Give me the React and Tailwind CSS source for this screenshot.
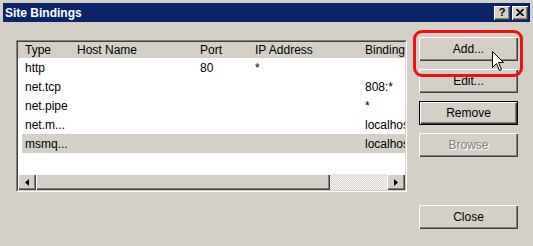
import React from 'react';

const cols = [
  { label: 'Type', w: 'w-[52px]' },
  { label: 'Host Name', w: 'w-[123px]' },
  { label: 'Port', w: 'w-[55px]' },
  { label: 'IP Address', w: 'w-[110px]' },
  { label: 'Binding', w: 'w-[70px]' },
];

const rows = [
  ['http', '', '80', '*', ''],
  ['net.tcp', '', '', '', '808:*'],
  ['net.pipe', '', '', '', '*'],
  ['net.m...', '', '', '', 'localhost'],
  ['msmq...', '', '', '', 'localhost'],
];

const raised = 'shadow-[inset_1px_1px_0_#ffffff,inset_-1px_-1px_0_#404040,inset_-2px_-2px_0_#808080]';

function Button({ children, primary, disabled }) {
  return (
    <div className={`w-[99px] h-[24px] ${primary ? 'border border-black' : ''}`}>
      <div className={`w-full h-full flex items-center justify-center ${raised} ${disabled ? 'text-[#808080] [text-shadow:1px_1px_0_#ffffff]' : ''}`}>
        {children}
      </div>
    </div>
  );
}

function Arrow({ dir }) {
  return (
    <svg width="4" height="7" viewBox="0 0 4 7">
      {dir === 'left' ? <path d="M4 0 L0 3.5 L4 7 Z" fill="#000" /> : <path d="M0 0 L4 3.5 L0 7 Z" fill="#000" />}
    </svg>
  );
}

export default function App() {
  return (
    <div className="w-[533px] h-[246px] bg-[#d4d0c8] relative overflow-hidden font-['Liberation_Sans',Arial,sans-serif] text-[12px] text-black">
      {/* title bar */}
      <div className="mx-[3px] mt-[3px] h-[19px] bg-[#0a246a] flex items-center pl-[2px] pr-[2px]">
        <span className="text-white font-bold text-[12px]">Site Bindings</span>
        <div className="ml-auto flex gap-[2px]">
          <div className={`w-[16px] h-[14px] bg-[#d4d0c8] ${raised} flex items-center justify-center font-bold text-[11px] leading-none`}>?</div>
          <div className={`w-[16px] h-[14px] bg-[#d4d0c8] ${raised} flex items-center justify-center`}>
            <svg width="8" height="7" viewBox="0 0 8 7">
              <path d="M0.5 0 L7.5 7 M7.5 0 L0.5 7" stroke="#000" strokeWidth="1.6" />
            </svg>
          </div>
        </div>
      </div>

      <div className="flex pl-[16px] pt-[18px]">
        {/* list view */}
        <div className="w-[391px] h-[152px] border border-t-[#808080] border-l-[#808080] border-r-white border-b-white">
          <div className="w-full h-full border border-t-[#404040] border-l-[#404040] border-r-[#d4d0c8] border-b-[#d4d0c8] bg-white flex flex-col overflow-hidden">
            <div className="flex h-[16px] shrink-0">
              {cols.map((c) => (
                <div key={c.label} className={`${c.w} shrink-0 h-full bg-[#d4d0c8] ${raised.replace('#404040', '#808080')} pl-[7px] flex items-center whitespace-nowrap`}>
                  {c.label}
                </div>
              ))}
            </div>
            <div className="flex-1">
              {rows.map((r, i) => (
                <div key={i} className={`flex h-[19px] items-center ml-[4px] ${i === 4 ? 'bg-[#d4d0c8]' : ''}`}>
                  {r.map((v, j) => (
                    <div key={j} className={`${j === 0 ? 'w-[48px] pl-[3px]' : cols[j].w + ' pl-[7px]'} shrink-0 whitespace-nowrap overflow-hidden`}>
                      {v}
                    </div>
                  ))}
                </div>
              ))}
            </div>
            {/* horizontal scrollbar */}
            <div className="flex h-[16px] shrink-0">
              <div className={`w-[18px] h-full bg-[#d4d0c8] ${raised} flex items-center justify-center`}>
                <Arrow dir="left" />
              </div>
              <div className={`w-[294px] h-full bg-[#d4d0c8] ${raised}`} />
              <div className="flex-1 h-full bg-[image:repeating-conic-gradient(#d4d0c8_0%_25%,#ffffff_0%_50%)] bg-[length:2px_2px]" />
              <div className={`w-[18px] h-full bg-[#d4d0c8] ${raised} flex items-center justify-center`}>
                <Arrow dir="right" />
              </div>
            </div>
          </div>
        </div>

        {/* buttons */}
        <div className="ml-[12px] -mt-[3px] flex flex-col gap-[8px]">
          <Button>Add...</Button>
          <Button>Edit...</Button>
          <Button primary>Remove</Button>
          <Button disabled>Browse</Button>
          <div className="mt-[40px]">
            <Button>Close</Button>
          </div>
        </div>
      </div>

      {/* red highlight */}
      <div className="absolute left-[413px] top-[30px] w-[110px] h-[47px] border-[3px] border-[#ee1111] rounded-[9px]" />

      {/* mouse cursor */}
      <svg className="absolute left-[492px] top-[51px]" width="13" height="22" viewBox="0 0 13 22">
        <path d="M0.5 0.5 L0.5 16.5 L4.5 12.5 L7.5 19.5 L9.5 18.5 L6.5 11.5 L11.5 11.5 Z" fill="#fff" stroke="#000" strokeWidth="1" />
      </svg>
    </div>
  );
}
